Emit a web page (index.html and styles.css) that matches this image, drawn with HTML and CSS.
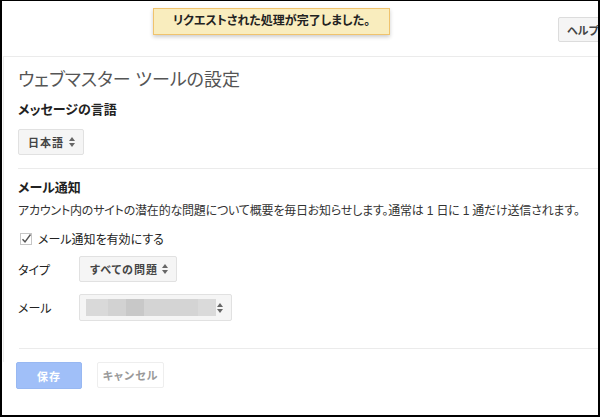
FILE: index.html
```html
<!DOCTYPE html>
<html lang="ja">
<head>
    <meta charset="UTF-8">
    <meta name="viewport" content="width=device-width, initial-scale=1.0">
    <title>ウェブマスター ツールの設定</title>
    <link rel="stylesheet" href="styles.css">
</head>
<body>
    <div class="frame">
        <div class="topbar">
            <div class="toast">リクエストされた処理が完了しました。</div>
            <button class="help-btn">ヘルプ</button>
        </div>

        <div class="content">
            <h1 class="page-title">ウェブマスター ツールの設定</h1>

            <div class="section">
                <h2>メッセージの言語</h2>
                <div class="select lang-select">日本語 <span class="arrows"></span></div>
            </div>

            <div class="section">
                <h2>メール通知</h2>
                <p class="desc">アカウント内のサイトの潜在的な問題について概要を毎日お知らせします。通常は 1 日に 1 通だけ送信されます。</p>
                <label class="check">
                    <svg width="12" height="12" viewBox="0 0 12 12">
                        <rect x="0.5" y="0.5" width="11" height="11" fill="#fff" stroke="#c6c6c6"/>
                        <path d="M2.5 6.2 L5 8.8 L10.5 1.5" fill="none" stroke="#555" stroke-width="1.4"/>
                    </svg>
                    メール通知を有効にする
                </label>
                <div class="field">
                    <span class="field-label">タイプ</span>
                    <div class="select type-select">すべての問題 <span class="arrows"></span></div>
                </div>
                <div class="field">
                    <span class="field-label">メール</span>
                    <div class="select mail-select">
                        <span class="blur">
                            <i style="width: 22px; background: #d9d9d9"></i>
                            <i style="width: 18px; background: #d2d2d2"></i>
                            <i style="width: 18px; background: #c8c8c8"></i>
                            <i style="width: 54px; background: #d4d4d4"></i>
                            <i style="width: 18px; background: #dadada"></i>
                        </span>
                        <span class="arrows"></span>
                    </div>
                </div>
            </div>

            <div class="divider"></div>
        </div>

        <div class="actions">
            <button class="save-btn">保存</button>
            <button class="cancel-btn">キャンセル</button>
        </div>
    </div>
</body>
</html>
```

FILE: styles.css
```css
* {
    margin: 0;
    padding: 0;
    box-sizing: border-box;
    font-family: Arial, "Liberation Sans", "Noto Sans CJK JP", sans-serif;
    font-feature-settings: "palt";
}

body {
    background-color: #fff;
}

.frame {
    position: relative;
    width: 600px;
    height: 417px;
    border: 2px solid #000;
    border-top-width: 1px;
    overflow: hidden;
    color: #222;
    font-size: 12px;
}

.topbar {
    height: 55px;
    display: flex;
    justify-content: flex-end;
    align-items: flex-start;
    padding-top: 16px;
}

.toast {
    position: absolute;
    left: 151px;
    top: 7px;
    width: 237px;
    height: 27px;
    line-height: 25px;
    text-align: center;
    background-color: #f9edbe;
    border: 1px solid #f0c36d;
    box-shadow: 0 2px 4px rgba(0, 0, 0, 0.2);
    font-size: 12px;
    font-weight: bold;
    color: #222;
}

.help-btn {
    width: 52px;
    height: 25px;
    margin-right: -12px;
    padding-left: 8px;
    text-align: left;
    background-color: #f5f5f5;
    border: 1px solid #dcdcdc;
    border-radius: 2px;
    font-size: 11px;
    font-weight: bold;
    color: #444;
}

.content {
    display: flex;
    flex-direction: column;
    border-top: 1px solid #ebebeb;
    border-left: 1px solid #ebebeb;
    margin-left: 1px;
    padding: 12px 0 0 14px;
    height: 306px;
}

.page-title {
    font-size: 18px;
    font-weight: normal;
    color: #555;
    line-height: 22px;
}

.section h2 {
    font-size: 13px;
    font-weight: bold;
    color: #222;
    line-height: 16px;
}

.section:first-of-type {
    margin-top: 11px;
    padding-bottom: 13px;
    border-bottom: 1px solid #ebebeb;
}

.section + .section {
    padding-top: 11px;
}

.select {
    display: flex;
    align-items: center;
    height: 26px;
    background-color: #f5f5f5;
    border: 1px solid #e1e1e1;
    border-radius: 2px;
    font-size: 11px;
    font-weight: bold;
    letter-spacing: 1px;
    color: #444;
}

.arrows {
    position: relative;
    width: 7px;
    height: 10px;
    margin-left: auto;
}

.arrows::before,
.arrows::after {
    content: "";
    position: absolute;
    left: 0;
    border-left: 3.5px solid transparent;
    border-right: 3.5px solid transparent;
}

.arrows::before {
    top: 0;
    border-bottom: 4px solid #666;
}

.arrows::after {
    bottom: 0;
    border-top: 4px solid #666;
}

.lang-select {
    width: 66px;
    margin-top: 11px;
    padding: 0 7px 0 9px;
}

.desc {
    margin-top: 7px;
    font-size: 12px;
    line-height: 16px;
    letter-spacing: -0.2px;
    color: #333;
}

.check {
    display: flex;
    align-items: center;
    gap: 6px;
    margin-top: 11px;
    margin-left: 2px;
    font-size: 12px;
    color: #222;
}

.field {
    display: flex;
    align-items: center;
    margin-top: 9px;
}

.field + .field {
    margin-top: 12px;
}

.field-label {
    width: 61px;
    font-size: 12px;
    color: #222;
}

.type-select {
    width: 98px;
    padding: 0 7px 0 10px;
}

.mail-select {
    width: 153px;
    height: 27px;
    padding: 0 7px 0 6px;
}

.blur {
    display: flex;
    height: 17px;
}

.blur i {
    display: block;
    height: 17px;
}

.divider {
    margin-top: auto;
    margin-bottom: 13px;
    margin-left: 1px;
    border-top: 1px solid #ebebeb;
}

.actions {
    display: flex;
    gap: 15px;
    padding-left: 14px;
}

.save-btn {
    width: 66px;
    height: 27px;
    background-color: #a0bff8;
    border: 1px solid #98b8f2;
    border-radius: 2px;
    color: #fff;
    font-size: 11px;
    font-weight: bold;
    letter-spacing: 1px;
}

.cancel-btn {
    width: 67px;
    height: 26px;
    background-color: #fff;
    border: 1px solid #eee;
    border-radius: 2px;
    color: #999;
    font-size: 11px;
    font-weight: bold;
    letter-spacing: 1px;
}
```
